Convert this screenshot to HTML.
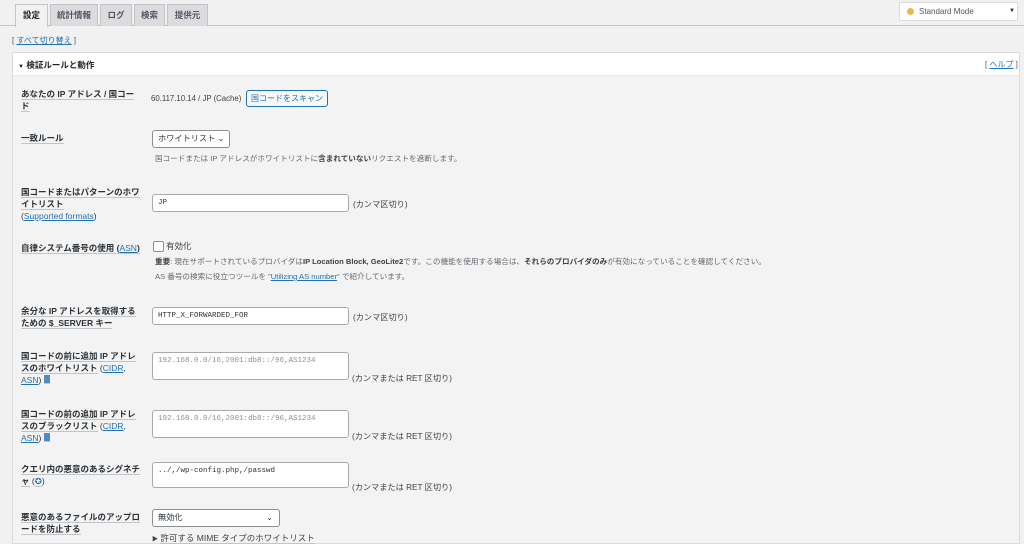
<!DOCTYPE html>
<html><head><meta charset="utf-8"><style>
body{margin:0;width:1024px;height:544px;overflow:hidden;background:#f1f1f1;font-family:"Liberation Sans","Noto Sans CJK JP",sans-serif;font-size:8px;color:#3c434a;position:relative}
.a{position:absolute;white-space:nowrap}
.tab{position:absolute;top:4px;height:21px;background:#dcdcde;border:1px solid #c3c4c7;border-bottom:none;font-weight:bold;font-size:8.5px;line-height:21px;text-align:center;color:#50575e}
.lab{position:absolute;left:21px;font-weight:bold;color:#2c3338;line-height:12px;font-size:8.5px}
.lab span{border-bottom:1px solid #c3c4c7}
a{color:#2271b1}
.inp{position:absolute;background:#fff;border:1px solid #a7aaad;border-radius:3px;font-family:"Liberation Mono",monospace;font-size:7.5px;color:#2c3338;box-sizing:border-box;padding:4px 5px}
.ph{color:#8c8f94}
.note{position:absolute;font-size:8.2px;color:#3c434a;white-space:nowrap}
.desc{position:absolute;font-size:7.6px;color:#646970;white-space:nowrap}
</style></head><body>
<div class="a" style="left:0;top:25px;width:1024px;height:1px;background:#c3c4c7"></div>
<div class="tab" style="left:15px;width:31px;background:#f1f1f1;color:#1d2327;height:22px">設定</div>
<div class="tab" style="left:50px;width:46px">統計情報</div>
<div class="tab" style="left:100px;width:30px">ログ</div>
<div class="tab" style="left:134px;width:29px">検索</div>
<div class="tab" style="left:167px;width:39px">提供元</div>
<div class="a" style="left:899px;top:2px;width:119px;height:19px;background:#fff;border:1px solid #dcdcde;box-sizing:border-box"></div>
<div class="a" style="left:907px;top:8px;width:7px;height:7px;border-radius:50%;background:#e6b94f"></div>
<div class="a" style="left:919px;top:7px;font-size:8px;color:#50575e">Standard Mode</div>
<div class="a" style="left:1009px;top:8px;font-size:6px;color:#1d2327">▼</div>
<div class="a" style="left:12px;top:35px;font-size:8px;color:#50575e">[ <a href="#">すべて切り替え</a> ]</div>
<div class="a" style="left:12px;top:52px;width:1008px;height:492px;border:1px solid #dcdcde;box-sizing:border-box;background:#f3f3f3"></div>
<div class="a" style="left:13px;top:53px;width:1006px;height:22px;background:#fff;border-bottom:1px solid #e6e6e6"></div>
<div class="a" style="left:18px;top:59px;font-size:8.5px;font-weight:bold;color:#1d2327"><span style="font-size:6px">▼</span> 検証ルールと動作</div>
<div class="a" style="left:985px;top:59px;font-size:8px;color:#50575e">[ <a href="#">ヘルプ</a> ]</div>

<div class="lab" style="top:88px"><span>あなたの IP アドレス / 国コー</span><br><span>ド</span></div>
<div class="a" style="left:151px;top:94px;font-size:7.8px">60.117.10.14 / JP (Cache)</div>
<div class="a" style="left:246px;top:90px;width:82px;height:17px;border:1px solid #2271b1;border-radius:3px;background:#f6f7f7;color:#2271b1;font-size:8px;line-height:16px;text-align:center;box-sizing:border-box">国コードをスキャン</div>

<div class="lab" style="top:132px"><span>一致ルール</span></div>
<div class="a" style="left:152px;top:130px;width:78px;height:18px;background:#fff;border:1px solid #8c8f94;border-radius:3px;box-sizing:border-box;font-size:8.2px;line-height:16px;padding-left:5px;color:#2c3338">ホワイトリスト ⌄</div>
<div class="desc" style="left:155px;top:153px">国コードまたは IP アドレスがホワイトリストに<b style="color:#3c434a">含まれていない</b>リクエストを遮断します。</div>

<div class="lab" style="top:186px"><span>国コードまたはパターンのホワ</span><br><span>イトリスト</span><br><span style="font-weight:normal;border:none">(<a href="#">Supported formats</a>)</span></div>
<div class="inp" style="left:152px;top:194px;width:197px;height:18px">JP</div>
<div class="note" style="left:353px;top:198px">(カンマ区切り)</div>

<div class="lab" style="top:242px"><span>自律システム番号の使用 (<a href="#" style="font-weight:normal">ASN</a>)</span></div>
<div class="a" style="left:153px;top:241px;width:9px;height:9px;border:1px solid #8c8f94;border-radius:2px;background:#fff"></div>
<div class="a" style="left:166px;top:240px;font-size:8.5px">有効化</div>
<div class="desc" style="left:155px;top:256px"><b style="color:#3c434a">重要</b>: 現在サポートされているプロバイダは<b style="color:#3c434a">IP Location Block, GeoLite2</b>です。この機能を使用する場合は、<b style="color:#3c434a">それらのプロバイダのみ</b>が有効になっていることを確認してください。</div>
<div class="desc" style="left:155px;top:271px">AS 番号の検索に役立つツールを "<a href="#">Utilizing AS number</a>" で紹介しています。</div>

<div class="lab" style="top:305px"><span>余分な IP アドレスを取得する</span><br><span>ための $_SERVER キー</span></div>
<div class="inp" style="left:152px;top:307px;width:197px;height:18px">HTTP_X_FORWARDED_FOR</div>
<div class="note" style="left:353px;top:311px">(カンマ区切り)</div>

<div class="lab" style="top:350px"><span>国コードの前に追加 IP アドレ</span><br><span>スのホワイトリスト</span> <span style="font-weight:normal;border:none">(<a href="#">CIDR</a>,</span><br><span style="font-weight:normal;border:none"><a href="#">ASN</a>) <span style="display:inline-block;width:6px;height:8px;background:#4f8bc4;vertical-align:-1px"></span></span></div>
<div class="inp" style="left:152px;top:352px;width:197px;height:28px"><span class="ph">192.168.0.0/16,2001:db8::/96,AS1234</span></div>
<div class="note" style="left:352px;top:372px">(カンマまたは RET 区切り)</div>

<div class="lab" style="top:408px"><span>国コードの前の追加 IP アドレ</span><br><span>スのブラックリスト</span> <span style="font-weight:normal;border:none">(<a href="#">CIDR</a>,</span><br><span style="font-weight:normal;border:none"><a href="#">ASN</a>) <span style="display:inline-block;width:6px;height:8px;background:#4f8bc4;vertical-align:-1px"></span></span></div>
<div class="inp" style="left:152px;top:410px;width:197px;height:28px"><span class="ph">192.168.0.0/16,2001:db8::/96,AS1234</span></div>
<div class="note" style="left:352px;top:430px">(カンマまたは RET 区切り)</div>

<div class="lab" style="top:463px"><span>クエリ内の悪意のあるシグネチ</span><br><span>ャ</span> <span style="font-weight:normal;border:none">(<span style="color:#2271b1">✪</span>)</span></div>
<div class="inp" style="left:152px;top:462px;width:197px;height:26px">../,/wp-config.php,/passwd</div>
<div class="note" style="left:352px;top:481px">(カンマまたは RET 区切り)</div>

<div class="lab" style="top:511px"><span>悪意のあるファイルのアップロ</span><br><span>ードを防止する</span></div>
<div class="a" style="left:152px;top:509px;width:128px;height:18px;background:#fff;border:1px solid #8c8f94;border-radius:3px;box-sizing:border-box;font-size:8.2px;line-height:16px;padding-left:5px;color:#2c3338">無効化<span style="position:absolute;right:6px">⌄</span></div>
<div class="a" style="left:152px;top:532px;font-size:8.5px"><span style="font-size:6px">▶</span> <span style="border-bottom:1px solid #c3c4c7">許可する MIME タイプのホワイトリスト</span></div>
</body></html>
